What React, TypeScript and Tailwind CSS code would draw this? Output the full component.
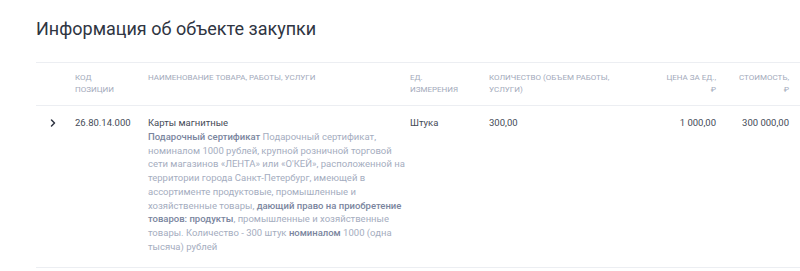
import { ChevronRight } from "lucide-react";

const cols = "grid grid-cols-[39px_73px_262px_79px_147px_80px_73px_1fr]";

export default function App() {
  return (
    <div className="bg-white w-[800px] h-[271px] overflow-hidden font-['Roboto',sans-serif]">
      <h2 className="pl-[36px] pt-[17px] text-[18px] leading-[24px] text-[#2f3542]">Информация об объекте закупки</h2>
      <div className="ml-[36px] mt-[21px] border-t border-[#eceef2]">
        <div className={`${cols} pt-[9px] pb-[9px] text-[8px] leading-[12px] uppercase text-[#a3aabb] border-b border-[#eceef2]`}>
          <div />
          <div>Код<br />позиции</div>
          <div>Наименование товара, работы, услуги</div>
          <div>Ед.<br />измерения</div>
          <div className="pr-4">Количество (объем работы, услуги)</div>
          <div className="text-right">Цена за ед.,<br />₽</div>
          <div className="text-right">Стоимость,<br />₽</div>
          <div />
        </div>
        <div className={`${cols} pt-[10px] pb-[13px] text-[9.5px] leading-[13.75px] text-[#454b57] border-b border-[#eceef2]`}>
          <div className="pl-[11px] pt-[1px]">
            <ChevronRight size={12} strokeWidth={3} className="text-[#2f3542]" />
          </div>
          <div>26.80.14.000</div>
          <div className="pr-[4px]">
            <div>Карты магнитные</div>
            <p className="text-[#a5adc0]">
              <b className="font-medium text-[#7a859e]">Подарочный сертификат</b> Подарочный сертификат, номиналом 1000 рублей, крупной розничной торговой сети магазинов «ЛЕНТА» или «О'КЕЙ», расположенной на территории города Санкт-Петербург, имеющей в ассортименте продуктовые, промышленные и хозяйственные товары, <b className="font-medium text-[#7a859e]">дающий право на приобретение товаров: продукты</b>, промышленные и хозяйственные товары. Количество - 300 штук <b className="font-medium text-[#7a859e]">номиналом</b> 1000 (одна тысяча) рублей
            </p>
          </div>
          <div>Штука</div>
          <div>300,00</div>
          <div className="text-right">1 000,00</div>
          <div className="text-right">300 000,00</div>
          <div />
        </div>
      </div>
    </div>
  );
}
